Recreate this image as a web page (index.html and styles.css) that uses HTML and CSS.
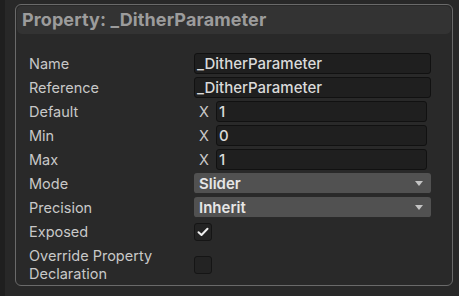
FILE: index.html
```html
<!DOCTYPE html>
<html>
<head>
<meta charset="utf-8">
<link rel="stylesheet" href="styles.css">
</head>
<body>
<div class="strip"></div>
<div class="main">
  <div class="panel">
    <div class="header">Property: _DitherParameter</div>
    <div class="rows">
      <div class="label">Name</div>
      <div class="field">_DitherParameter</div>

      <div class="label">Reference</div>
      <div class="field">_DitherParameter</div>

      <div class="label">Default</div>
      <div class="vec"><span class="x">X</span><div class="field">1</div></div>

      <div class="label">Min</div>
      <div class="vec"><span class="x">X</span><div class="field">0</div></div>

      <div class="label">Max</div>
      <div class="vec"><span class="x">X</span><div class="field">1</div></div>

      <div class="label">Mode</div>
      <div class="dropdown"><span>Slider</span><span class="arrow"></span></div>

      <div class="label">Precision</div>
      <div class="dropdown"><span>Inherit</span><span class="arrow"></span></div>

      <div class="label">Exposed</div>
      <div class="checkcell"><div class="checkbox">
        <svg width="12" height="10" viewBox="0 0 12 10"><path d="M1.5 5.2 L4.5 8 L10.5 1.8" fill="none" stroke="#eeeeee" stroke-width="2" stroke-linecap="round" stroke-linejoin="round"/></svg>
      </div></div>

      <div class="label two">Override Property<br>Declaration</div>
      <div class="checkcell tall"><div class="checkbox"></div></div>
    </div>
  </div>
</div>
</body>
</html>
```
FILE: styles.css
```css
html, body {
  margin: 0;
  padding: 0;
  background: #282828;
  width: 459px;
  height: 296px;
  overflow: hidden;
  font-family: Inter, "Noto Sans", sans-serif;
}
body {
  display: flex;
}
.strip {
  width: 5px;
  background: #1f1f1f;
  flex: none;
}
.main {
  flex: 1;
  padding: 4px 0 0 10px;
}
.panel {
  width: 436px;
  height: 280px;
  border: 1px solid #6a6a6a;
  border-radius: 6px;
  background: #292929;
}
.header {
  margin: 1px 1px 0 1px;
  height: 28px;
  background: #333333;
  border-radius: 5px;
  color: #9c9c9c;
  font-weight: 700;
  font-size: 18px;
  line-height: 28px;
  padding-left: 5px;
  letter-spacing: 0.1px;
}
.rows {
  display: grid;
  grid-template-columns: 165px 1fr;
  grid-auto-rows: 21px;
  row-gap: 3px;
  padding: 19px 21px 0 13px;
}
.label {
  color: #c8c8c8;
  font-size: 14.5px;
  display: flex;
  align-items: center;
}
.label.two {
  line-height: 18px;
  height: 36px;
  margin-top: 2px;
}
.field {
  background: #1f1f1f;
  border: 1px solid #111111;
  border-radius: 3px;
  color: #dadada;
  font-size: 15px;
  font-weight: 500;
  display: flex;
  align-items: center;
  padding-left: 2px;
  box-sizing: border-box;
  height: 21px;
  flex: 1;
}
.vec {
  display: flex;
  align-items: center;
  padding-right: 4px;
}
.x {
  width: 22px;
  flex: none;
  color: #c8c8c8;
  font-size: 14.5px;
  padding-left: 5px;
  box-sizing: border-box;
}
.dropdown {
  background: #515151;
  border-radius: 3px;
  color: #e6e6e6;
  font-size: 15px;
  font-weight: 600;
  display: flex;
  align-items: center;
  justify-content: space-between;
  padding: 0 8px 0 5px;
  border-bottom: 1px solid #2a2a2a;
}
.arrow {
  width: 0;
  height: 0;
  border-left: 4px solid transparent;
  border-right: 4px solid transparent;
  border-top: 5px solid #c4c4c4;
}
.checkcell {
  display: flex;
  align-items: center;
}
.checkcell.tall {
  height: 36px;
  margin-top: 2px;
}
.checkbox {
  width: 18px;
  height: 18px;
  box-sizing: border-box;
  background: #232323;
  border: 1px solid #151515;
  border-radius: 3px;
  display: flex;
  align-items: center;
  justify-content: center;
}
```
